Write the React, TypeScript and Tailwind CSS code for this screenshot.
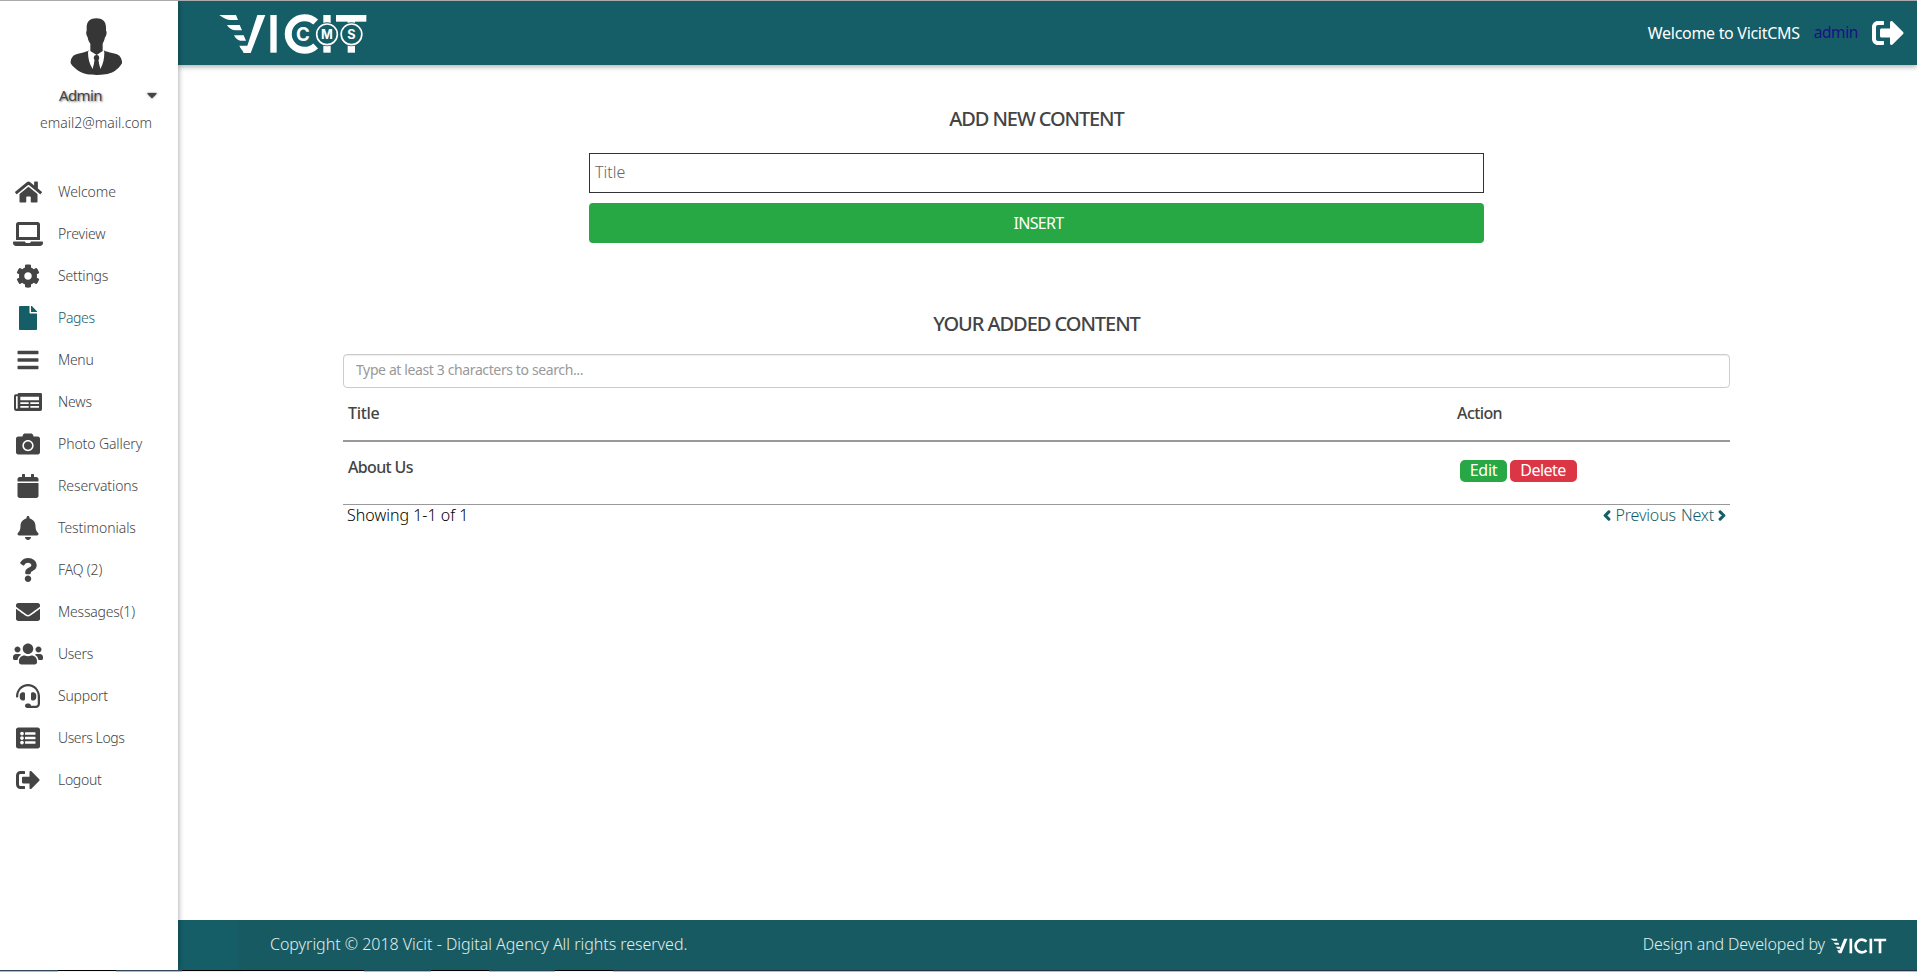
import React from "react";
import type { IconType } from "react-icons";
import {
  FaBars,
  FaBell,
  FaCalendar,
  FaCamera,
  FaCaretDown,
  FaChevronLeft,
  FaChevronRight,
  FaCog,
  FaEnvelope,
  FaFile,
  FaHeadset,
  FaHome,
  FaLaptop,
  FaListAlt,
  FaQuestion,
  FaSignOutAlt,
  FaUsers,
} from "react-icons/fa";

function NewsIcon({ className }: { className?: string }) {
  return (
    <svg viewBox="42 660 84 72" className={className} fill="currentColor">
      <path
        fillRule="evenodd"
        d="M57 669 H122 Q126 669 126 673 V718 Q126 723 121 723 H49 Q42 723 42 716 V678 Q42 673 47 673 H53 Q53 669 57 669 Z M48 679 V715 Q50 718 53 715 V679 Z M61 680 V691 H117 V680 Z M61 697 V702 H86 V697 Z M91 697 V702 H117 V697 Z M61 708 V713 H86 V708 Z M91 708 V713 H117 V708 Z"
      />
    </svg>
  );
}

type Item = {
  label: string;
  icon: IconType | typeof NewsIcon;
  tracking: string;
  size?: string;
  active?: boolean;
};

const ITEMS: Item[] = [
  { label: "Welcome", icon: FaHome, tracking: "tracking-[-0.1px]", size: "h-6 w-[27px]" },
  { label: "Preview", icon: FaLaptop, tracking: "tracking-[-0.15px]", size: "h-6 w-[30px]" },
  { label: "Settings", icon: FaCog, tracking: "tracking-[-0.15px]" },
  { label: "Pages", icon: FaFile, tracking: "tracking-[-0.35px]", active: true },
  { label: "Menu", icon: FaBars, tracking: "tracking-[-0.3px]" },
  { label: "News", icon: NewsIcon, tracking: "tracking-[-0.15px]", size: "h-6 w-7" },
  { label: "Photo Gallery", icon: FaCamera, tracking: "tracking-[-0.1px]" },
  { label: "Reservations", icon: FaCalendar, tracking: "tracking-[-0.1px]" },
  { label: "Testimonials", icon: FaBell, tracking: "tracking-[-0.05px]" },
  { label: "FAQ (2)", icon: FaQuestion, tracking: "tracking-[-0.15px]" },
  { label: "Messages(1)", icon: FaEnvelope, tracking: "tracking-[-0.2px]" },
  { label: "Users", icon: FaUsers, tracking: "tracking-[-0.3px]", size: "h-6 w-[30px]" },
  { label: "Support", icon: FaHeadset, tracking: "tracking-[-0.2px]" },
  { label: "Users Logs", icon: FaListAlt, tracking: "tracking-[-0.42px]" },
  { label: "Logout", icon: FaSignOutAlt, tracking: "tracking-[-0.3px]" },
];

const TASKBAR = [
  "w-[58px] bg-[#a9bccb] border-[#31455c]",
  "w-[58px] bg-[#f2f4f4] border-[#000000]",
  "w-[66px] bg-[#a9bccb] border-[#31455c]",
  "w-[60px] bg-[#e6efee] border-[#000000]",
  "w-[62px] bg-[#f2f4f4] border-[#000000]",
  "w-[60px] bg-[#f2f4f4] border-[#000000]",
  "w-[67px] bg-[#a9bccb] border-[#24465a]",
  "w-[58px] bg-[#f2f4f4] border-[#000000]",
  "w-[66px] bg-[#a9bccb] border-[#24465a]",
  "w-[58px] bg-[#f2f4f4] border-[#000000]",
];

function Avatar() {
  return (
    <svg viewBox="45 25 159 177" className="h-[59px] w-[53px]" fill="#363636">
      <path d="M95 55 C95 38 106 29 124 29 C142 29 153 38 153 56 L153 66 C157 70 154 82 150 86 C148 96 145 101 143 105 L143 127 L125 139 L106 127 L106 105 C102 100 99 94 98 86 C94 81 92 70 95 66 Z" />
      <path d="M102 125 L99 130 C99 148 103 166 113 181 L119 156 L116 148 L118 141 L125 138 L131 141 L133 148 L130 156 L136 181 C145 166 148 148 148 130 L146 125 C160 133 184 133 193 141 C199 147 202 158 201 164 C190 184 168 196 151 197 C132 200 112 199 97 197 C80 194 58 182 47 164 C46 156 49 147 55 141 C68 133 90 133 102 125 Z" />
      <path d="M119 156 L130 156 L134 184 L125 197 L115 184 Z" />
    </svg>
  );
}

function CmsLogo() {
  return (
    <svg viewBox="54 39 450 126" className="h-[42px] w-[150px]" fill="#fff">
      <path d="M58 45 H108 L114 60 H90 C76 59 66 50 58 45 Z" />
      <path d="M81 75 H119 L126 91 H105 C94 90 86 83 81 75 Z" />
      <path d="M102 106 H131 L138 122 H121 C112 121 106 114 102 106 Z" />
      <path d="M172 45 H196 L152 159 H131 C128 150 121 146 118 137 H142 Z" />
      <rect x="211" y="45" width="19" height="113" />
      <path d="M347 66 A49 49 0 1 0 347 138" fill="none" stroke="#fff" strokeWidth="21" />
      <rect x="370" y="45" width="22" height="113" />
      <rect x="408" y="45" width="91" height="20" />
      <rect x="443" y="45" width="22" height="113" />
      <g fill="#155e68" stroke="#155e68" strokeWidth="4">
        <circle cx="381" cy="103" r="34" />
        <circle cx="454.500" cy="103" r="34" />
      </g>
      <g fill="none" stroke="#fff" strokeWidth="5">
        <circle cx="381" cy="103" r="31" />
        <circle cx="454.500" cy="103" r="31" />
      </g>
      <g fontFamily="Inter, sans-serif" fontWeight="700" textAnchor="middle">
        <text x="309" y="123" fontSize="56">C</text>
        <text x="381" y="117" fontSize="38">M</text>
        <text x="454.500" y="117" fontSize="38">S</text>
      </g>
    </svg>
  );
}

function AgencyLogo() {
  return (
    <svg viewBox="690 112 170 48" className="h-4 w-[57px]" fill="#fff">
      <path d="M691 114 H710 L712 120 H700 Z M700 126 H715 L717 132 H706 Z M707 138 H719 L722 144 H712 Z" />
      <path d="M732 114 H742 L724 158 H716 L711 149 H718 Z" />
      <rect x="748" y="114" width="8" height="44" />
      <path d="M799 123 A19 19 0 1 0 799 149" fill="none" stroke="#fff" strokeWidth="8" />
      <rect x="808" y="114" width="8" height="44" />
      <path d="M821 114 H858 V122 H843.500 V158 H835.500 V122 H821 Z" />
    </svg>
  );
}

function Sidebar() {
  return (
    <aside className="z-10 flex w-[178px] shrink-0 flex-col bg-white text-[#444] shadow-[1px_0_5px_rgba(0,0,0,0.3)]">
      <div className="flex h-[170px] flex-col pt-4">
        <div className="pl-[70px]">
          <Avatar />
        </div>
        <div className="mt-[7px] flex h-6 items-center justify-between pr-[21px] pl-[59px]">
          <span className="text-[15px] tracking-[-0.6px] [text-shadow:1px_1px_2px_rgba(0,0,0,0.5)]">Admin</span>
          <FaCaretDown className="h-4 w-[10px] drop-shadow-[0_0_1px_rgba(0,0,0,0.5)]" preserveAspectRatio="none" />
        </div>
        <p className="mt-px pl-10 text-sm leading-[30px] font-light">email2@mail.com</p>
      </div>
      <nav>
        {ITEMS.map(({ label, icon: Icon, tracking, size, active }) => (
          <a key={label} className={`flex h-[42px] items-center ${active ? "text-[#155e68]" : ""}`}>
            <span className="flex w-14 justify-center">
              <Icon className={size ?? "size-6"} />
            </span>
            <span className={`pb-px pl-[2px] text-sm font-light ${tracking}`}>{label}</span>
          </a>
        ))}
      </nav>
    </aside>
  );
}

export default function App() {
  return (
    <div className="flex h-[972px] w-[1917px] flex-col overflow-hidden border-t border-[#aaa] bg-white font-['Noto_Sans',sans-serif]">
      <div className="flex min-h-0 flex-1">
        <Sidebar />
        <div className="flex flex-1 flex-col">
          <header className="flex h-16 shrink-0 items-center justify-between bg-[#155e68] pr-[13px] pl-10 text-white shadow-[0_2px_5px_rgba(0,0,0,0.3)]">
            <div className="pt-px">
              <CmsLogo />
            </div>
            <div className="flex items-center">
              <span className="pb-px tracking-[-0.3px]">Welcome to VicitCMS</span>
              <span className="ml-[14px] pb-px text-[15.5px] tracking-[-0.4px] text-[#1c0f86]">admin</span>
              <FaSignOutAlt className="ml-[14px] size-8" />
            </div>
          </header>

          <main className="flex-1 pl-[165px]">
            <div className="flex w-[1387px] flex-col text-[#444]">
              <h2 className="mt-[38px] text-center text-xl leading-8 font-medium tracking-[-1.1px]">ADD NEW CONTENT</h2>
              <form className="mx-auto mt-[18px] flex w-[895px] flex-col gap-[10px]">
                <input
                  placeholder="Title"
                  className="h-10 border border-[#333] px-[5px] pb-[2px] text-base font-light placeholder:text-[#666]"
                />
                <button type="button" className="h-10 rounded bg-[#28a745] pb-px pl-1 text-base tracking-[-0.7px] text-white">
                  INSERT
                </button>
              </form>
              <h2 className="mt-[65px] text-center text-xl leading-8 font-medium tracking-[-1.05px]">YOUR ADDED CONTENT</h2>
              <input
                placeholder="Type at least 3 characters to search..."
                className="mt-[14px] h-[34px] rounded border border-[#ccc] px-3 pb-[3px] text-sm tracking-[-0.38px] shadow-[inset_0_1px_1px_rgba(0,0,0,0.075)] placeholder:text-[#999]"
              />
              <div className="flex h-[54px] border-b-2 border-[#999] pt-[13px] leading-6 font-medium">
                <span className="w-[1114px] pl-[5px] tracking-[-0.3px]">Title</span>
                <span className="tracking-[-0.6px]">Action</span>
              </div>
              <div className="flex h-[63px] border-b border-[#999] leading-6 tracking-[-0.55px]">
                <span className="w-[1117px] pt-[13px] pl-[5px] font-medium tracking-[-0.65px]">About Us</span>
                <span className="flex gap-[3px] pt-[18px] text-white">
                  <a className="h-[22px] w-[47px] rounded-[5px] bg-[#28a745] text-center leading-[20px] tracking-[-0.3px]">Edit</a>
                  <a className="h-[22px] w-[67px] rounded-[5px] bg-[#dc3545] pr-px text-center leading-[20px]">Delete</a>
                </span>
              </div>
              <div className="flex justify-between pr-1 pl-1 leading-[21px] font-light">
                <span className="text-black">Showing 1-1 of 1</span>
                <span className="flex items-center text-[#155e68]">
                  <FaChevronLeft className="h-[11px] w-2 stroke-[60]" />
                  <span className="ml-1 tracking-[-0.15px]">Previous</span>
                  <span className="ml-[5px] tracking-[-0.15px]">Next</span>
                  <FaChevronRight className="ml-1 h-[11px] w-2 stroke-[60]" />
                </span>
              </div>
            </div>
          </main>

          <footer className="flex h-[50px] shrink-0 items-center bg-[linear-gradient(90deg,#155e68_0,#155e68_60px,#175a61_60px)] pr-[30px] pb-[2px] pl-[92px] font-light text-[#e4eeee]">
            <span className="tracking-[-0.02px]">Copyright © 2018 Vicit - Digital Agency All rights reserved.</span>
            <span className="ml-auto tracking-[-0.12px]">Design and Developed by</span>
            <span className="pt-[3px] pl-[5px]">
              <AgencyLogo />
            </span>
          </footer>
        </div>
      </div>
      <div className="z-20 flex h-[2px] shrink-0 bg-[#b5bcc6]">
        {TASKBAR.map((cls, i) => (
          <span key={i} className={`h-[2px] border-t ${cls}`} />
        ))}
        <span className="h-[2px] flex-1 border-t border-[#24344a]" />
      </div>
    </div>
  );
}
